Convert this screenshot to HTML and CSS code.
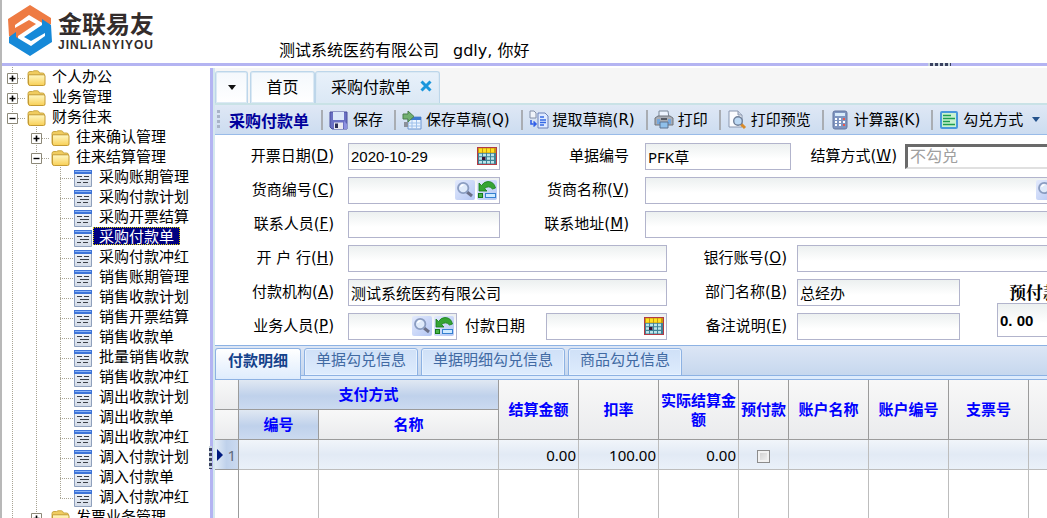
FILE: index.html
```html
<!DOCTYPE html>
<html lang="zh-CN">
<head>
<meta charset="utf-8">
<title>采购付款单</title>
<link rel="stylesheet" href="styles.css">
</head>
<body>
<svg class="defs" aria-hidden="true">
  <defs>
    <linearGradient id="gFolder" x1="0" y1="0" x2="0" y2="1"><stop offset="0" stop-color="#fff8c4"/><stop offset="1" stop-color="#f8cf55"/></linearGradient>
    <linearGradient id="gSheet" x1="0" y1="0" x2="0" y2="1"><stop offset="0" stop-color="#f4f7fc"/><stop offset="1" stop-color="#d3dbe8"/></linearGradient>
    <linearGradient id="gBtn" x1="0" y1="0" x2="1" y2="1"><stop offset="0" stop-color="#e3eafc"/><stop offset="1" stop-color="#b3c6f4"/></linearGradient>
  </defs>
  <symbol id="folder" viewBox="0 0 19 17"><path d="M1 5.5V3.5Q1 1.5 3 1.5H5.5L7 .8H10.5Q12 1 12.5 3H15.5Q17.5 3 17.5 5V14.5H3Q1 14.5 1 13Z" fill="#f0cc60" stroke="#cba845"/><path d="M1.5 4.8H16.5Q18 4.8 18 6V14Q18 15.5 16.5 15.5H3.2Q1.5 15.5 1.5 14Z" fill="url(#gFolder)" stroke="#c49a32"/></symbol>
  <symbol id="doc" viewBox="0 0 19 17"><path d="M.5.5H17.5V16.5H.5Z" fill="url(#gSheet)" stroke="#8fa0bc"/><path d="M0 0H18V4H0Z" fill="#3e74d8"/><path d="M1 1H17V2H1Z" fill="#8db4f4"/><path d="M3 6.5H8M10 6.5H15M6 9.500H15M3 12.500H7M9 12.500H14" stroke="#3c4048"/></symbol>
  <symbol id="plus" viewBox="0 0 11 11"><path d="M.5.5H10.5V10.5H.5Z" fill="#fff" stroke="#8c8878"/><path d="M2.5 5.5H8.5M5.5 2.5V8.5" stroke="#000" stroke-width="1.6"/></symbol>
  <symbol id="minus" viewBox="0 0 11 11"><path d="M.5.5H10.5V10.5H.5Z" fill="#fff" stroke="#8c8878"/><path d="M2.5 5.5H8.5" stroke="#000" stroke-width="1.4"/></symbol>
  <symbol id="search" viewBox="0 0 20 20"><rect width="20" height="20" rx="2" fill="url(#gBtn)"/><path d="M12 12L17 16" stroke="#6a6f88" stroke-width="3"/><circle cx="8.2" cy="8" r="5.2" fill="#dfeafa" stroke="#8a9cc0" stroke-width="1.8"/><path d="M5.5 7Q6.5 5 8.5 4.8" stroke="#fff" stroke-width="1.4" fill="none"/></symbol>
  <symbol id="undo" viewBox="0 0 20 20"><rect width="20" height="20" rx="2" fill="url(#gBtn)"/><path d="M2 3L2 11H10L7.5 8.5Q12 5 15.5 9L18.5 8Q17 1.500 11 1.500Q7 1.500 4.500 5.500Z" fill="#35a434" stroke="#157c18" stroke-width=".8"/><rect x="1.500" y="13.500" width="4" height="4" fill="#49b34a" stroke="#157c18"/><rect x="8.500" y="13.500" width="10" height="4" fill="#cfeaff" stroke="#3580d0"/></symbol>
  <symbol id="calendar" viewBox="0 0 20 18"><rect x=".5" y=".5" width="19" height="17" fill="#3f8296" stroke="#b33a45"/><path d="M1 1H19V6H1Z" fill="#c89a10"/><path d="M2 3.500H18" stroke="#ffe020" stroke-width="4" stroke-dasharray="3 1"/><path d="M2 8H18M2 11.500H18M2 15.200H18" stroke="#bce5ea" stroke-width="2.600" stroke-dasharray="3 1"/><path d="M5 10H8.500V13H5Z" fill="#3b1237"/></symbol>
</svg>

<div class="app">
  <header class="header">
    <div class="brand">
      <svg class="brand-mark" viewBox="0 0 44 52" role="img" aria-label="金联易友">
        <path d="M0 14L22 0L43 13V19L36 24V19L21 10L7 20V23L21 15L28 19L10 31V37L1 31Z" fill="#ee7b43"/>
        <path d="M0 14L22 0L43 13V19L36 24V19L21 10L7 20V23L21 15L28 19L10 31V37L1 31Z" fill="#1689d8" transform="rotate(180 22 25.500)"/>
      </svg>
      <div class="brand-text"><span class="brand-cn">金联易友</span><span class="brand-en">JINLIANYIYOU</span></div>
    </div>
    <div class="greeting"><span>测试系统医药有限公司</span><span>gdly, 你好</span></div>
    <span class="grip-h"></span>
  </header>

  <div class="body">
    <nav class="sidebar">
      <ul class="tree">
        <li class="node"><i class="cell line branch"><svg class="box"><use href="#plus"/></svg></i><svg class="ico"><use href="#folder"/></svg><a class="label" href="#">个人办公</a></li>
        <li class="node"><i class="cell line branch"><svg class="box"><use href="#plus"/></svg></i><svg class="ico"><use href="#folder"/></svg><a class="label" href="#">业务管理</a></li>
        <li class="node"><i class="cell line branch"><svg class="box"><use href="#minus"/></svg></i><svg class="ico"><use href="#folder"/></svg><a class="label" href="#">财务往来</a></li>
        <li class="node"><i class="cell line"></i><i class="cell line branch"><svg class="box"><use href="#plus"/></svg></i><svg class="ico"><use href="#folder"/></svg><a class="label" href="#">往来确认管理</a></li>
        <li class="node"><i class="cell line"></i><i class="cell line branch"><svg class="box"><use href="#minus"/></svg></i><svg class="ico"><use href="#folder"/></svg><a class="label" href="#">往来结算管理</a></li>
        <li class="node"><i class="cell line"></i><i class="cell line"></i><i class="cell line branch"></i><svg class="ico"><use href="#doc"/></svg><a class="label" href="#">采购账期管理</a></li>
        <li class="node"><i class="cell line"></i><i class="cell line"></i><i class="cell line branch"></i><svg class="ico"><use href="#doc"/></svg><a class="label" href="#">采购付款计划</a></li>
        <li class="node"><i class="cell line"></i><i class="cell line"></i><i class="cell line branch"></i><svg class="ico"><use href="#doc"/></svg><a class="label" href="#">采购开票结算</a></li>
        <li class="node"><i class="cell line"></i><i class="cell line"></i><i class="cell line branch"></i><svg class="ico"><use href="#doc"/></svg><a class="label selected" href="#">采购付款单</a></li>
        <li class="node"><i class="cell line"></i><i class="cell line"></i><i class="cell line branch"></i><svg class="ico"><use href="#doc"/></svg><a class="label" href="#">采购付款冲红</a></li>
        <li class="node"><i class="cell line"></i><i class="cell line"></i><i class="cell line branch"></i><svg class="ico"><use href="#doc"/></svg><a class="label" href="#">销售账期管理</a></li>
        <li class="node"><i class="cell line"></i><i class="cell line"></i><i class="cell line branch"></i><svg class="ico"><use href="#doc"/></svg><a class="label" href="#">销售收款计划</a></li>
        <li class="node"><i class="cell line"></i><i class="cell line"></i><i class="cell line branch"></i><svg class="ico"><use href="#doc"/></svg><a class="label" href="#">销售开票结算</a></li>
        <li class="node"><i class="cell line"></i><i class="cell line"></i><i class="cell line branch"></i><svg class="ico"><use href="#doc"/></svg><a class="label" href="#">销售收款单</a></li>
        <li class="node"><i class="cell line"></i><i class="cell line"></i><i class="cell line branch"></i><svg class="ico"><use href="#doc"/></svg><a class="label" href="#">批量销售收款</a></li>
        <li class="node"><i class="cell line"></i><i class="cell line"></i><i class="cell line branch"></i><svg class="ico"><use href="#doc"/></svg><a class="label" href="#">销售收款冲红</a></li>
        <li class="node"><i class="cell line"></i><i class="cell line"></i><i class="cell line branch"></i><svg class="ico"><use href="#doc"/></svg><a class="label" href="#">调出收款计划</a></li>
        <li class="node"><i class="cell line"></i><i class="cell line"></i><i class="cell line branch"></i><svg class="ico"><use href="#doc"/></svg><a class="label" href="#">调出收款单</a></li>
        <li class="node"><i class="cell line"></i><i class="cell line"></i><i class="cell line branch"></i><svg class="ico"><use href="#doc"/></svg><a class="label" href="#">调出收款冲红</a></li>
        <li class="node"><i class="cell line"></i><i class="cell line"></i><i class="cell line branch"></i><svg class="ico"><use href="#doc"/></svg><a class="label" href="#">调入付款计划</a></li>
        <li class="node"><i class="cell line"></i><i class="cell line"></i><i class="cell line branch"></i><svg class="ico"><use href="#doc"/></svg><a class="label" href="#">调入付款单</a></li>
        <li class="node"><i class="cell line"></i><i class="cell line"></i><i class="cell line last branch"></i><svg class="ico"><use href="#doc"/></svg><a class="label" href="#">调入付款冲红</a></li>
        <li class="node"><i class="cell line"></i><i class="cell line branch"><svg class="box"><use href="#plus"/></svg></i><svg class="ico"><use href="#folder"/></svg><a class="label" href="#">发票业务管理</a></li>
      </ul>
    </nav>
    <div class="splitter"><span class="grip-v"></span></div>

    <main class="main">
      <div class="content">
        <div class="page-tabs">
          <button class="page-tab menu" aria-label="标签列表"><svg width="8" height="5" viewBox="0 0 8 5"><path d="M0 0H8L4 5Z" fill="#111"/></svg></button>
          <button class="page-tab home">首页</button>
          <button class="page-tab active">采购付款单<svg width="12" height="12" viewBox="0 0 12 12"><path d="M1.500 1.500L10.500 10.500M10.500 1.500L1.500 10.500" stroke="#1a96dc" stroke-width="3"/></svg></button>
        </div>

        <div class="toolbar">
          <span class="grip"></span>
          <h1 class="title">采购付款单</h1>
          <button class="tool"><svg viewBox="0 0 20 20"><path d="M1 2H18V19H3L1 17Z" fill="#6a70c4" stroke="#4a4f9c"/><path d="M4 2H15V10H4Z" fill="#dce8fa"/><path d="M5 12.500H14V19H5Z" fill="#e8e8f0"/><path d="M6 13.500H9V18H6Z" fill="#2a2d55"/><path d="M15 11L18 14V19H15Z" fill="#8d92e0"/></svg>保存</button>
          <button class="tool"><svg viewBox="0 0 20 20"><path d="M6 7H19V19H6Z" fill="#eaf4ff" stroke="#6c95cf"/><path d="M6 7H19V10H6Z" fill="#3e7ad0"/><path d="M6 13H19M6 16H19M10 10V19M14.500 10V19" stroke="#9dc0ea"/><path d="M1 4H6V1L12 6.500L6 12V9H1Z" fill="#72b070" stroke="#4a7f4d"/><path d="M2 12H6V17H2Z" fill="#8b9099"/></svg>保存草稿(Q)</button>
          <button class="tool"><svg viewBox="0 0 20 20"><path d="M1 1H5L7 3V8H1Z" fill="#f0f4fa" stroke="#8490a8"/><path d="M2 10V14H6M4.500 11.500L7 14L4.500 16.500" fill="none" stroke="#315fe8" stroke-width="1.600"/><path d="M9 3H16L19 6V18H9Z" fill="#dfeaff" stroke="#6a80b8"/><path d="M11 7H15M11 10H17M11 12.500H17M11 15H15" stroke="#3569e4" stroke-width="1.500"/></svg>提取草稿(R)</button>
          <button class="tool"><svg viewBox="0 0 20 20"><path d="M5 1H14L15 8H5Z" fill="#edf4ff" stroke="#7b8798"/><path d="M1 8L4 6H16L19 8V15H1Z" fill="#a9adb5" stroke="#6f747d"/><path d="M3 9H6V14H3M14 9H17V14H14" fill="#75a7dc"/><path d="M6 12H14V18H6Z" fill="#8fc0ea" stroke="#5c7290"/><path d="M7 8H13V10H7Z" fill="#555a64"/></svg>打印</button>
          <button class="tool"><svg viewBox="0 0 20 20"><path d="M2 1H11L15 5V17H2Z" fill="#fbfcfe" stroke="#8996ae"/><path d="M11 1V5H15" fill="#cbd4e2" stroke="#8996ae"/><path d="M14 14L18 18" stroke="#d88b2a" stroke-width="3"/><circle cx="11" cy="11" r="4.300" fill="#bcd9f4" stroke="#6f7f98" stroke-width="1.400"/></svg>打印预览</button>
          <button class="tool"><svg viewBox="0 0 20 20"><rect x="3" y="1" width="14" height="18" rx="2" fill="#7f95c0" stroke="#6577a0"/><path d="M5 3H15V6H5Z" fill="#d7eafa"/><path d="M5 9H15M5 12H15M5 15H15" stroke="#fff" stroke-width="2" stroke-dasharray="2 2"/><path d="M13 9H15M13 15H15" stroke="#e7584e" stroke-width="2"/></svg>计算器(K)</button>
          <button class="tool"><svg viewBox="0 0 20 20"><rect x="2" y="2" width="16" height="16" rx="1" fill="#c9f2cf" stroke="#4a98dc" stroke-width="2"/><path d="M4 5.500H12M4 8.500H16M4 11.500H11M4 14.500H16" stroke="#1d9d50" stroke-width="1.500"/></svg>勾兑方式<svg class="caret" viewBox="0 0 8 6"><path d="M0 0H8L4 5Z" fill="#24528c"/></svg></button>
        </div>

        <form class="form">
          <div class="row">
            <label class="lab l1" for="f1">开票日期(<u>D</u>)</label>
            <span class="field w152"><input id="f1" class="latin" value="2020-10-29"><button type="button" class="pick" aria-label="选择日期"><svg class="cal"><use href="#calendar"/></svg></button></span>
            <label class="lab l2" for="f2">单据编号</label>
            <span class="field w146"><input id="f2" value="PFK草"></span>
            <label class="lab l3" for="f3">结算方式(<u>W</u>)</label>
            <select id="f3" class="select" disabled><option>不勾兑</option></select>
          </div>
          <div class="row">
            <label class="lab l1" for="f4">货商编号(<u>C</u>)</label>
            <span class="field w152"><input id="f4"><button type="button" class="pick" aria-label="查找"><svg><use href="#search"/></svg></button><button type="button" class="pick" aria-label="清除"><svg><use href="#undo"/></svg></button></span>
            <label class="lab l2" for="f5">货商名称(<u>V</u>)</label>
            <span class="field grow"><input id="f5"><button type="button" class="pick" aria-label="查找"><svg><use href="#search"/></svg></button><button type="button" class="pick" aria-label="清除"><svg><use href="#undo"/></svg></button></span>
          </div>
          <div class="row">
            <label class="lab l1" for="f6">联系人员(<u>F</u>)</label>
            <span class="field w152"><input id="f6"></span>
            <label class="lab l2" for="f7">联系地址(<u>M</u>)</label>
            <span class="field grow"><input id="f7"></span>
          </div>
          <div class="row">
            <label class="lab l1" for="f8">开 户 行(<u>H</u>)</label>
            <span class="field w319"><input id="f8"></span>
            <label class="lab l4" for="f9">银行账号(<u>O</u>)</label>
            <span class="field grow"><input id="f9"></span>
          </div>
          <div class="lower">
            <div class="lower-rows">
              <div class="row">
                <label class="lab l1" for="f10">付款机构(<u>A</u>)</label>
                <span class="field w319"><input id="f10" value="测试系统医药有限公司"></span>
                <label class="lab l4" for="f11">部门名称(<u>B</u>)</label>
                <span class="field w163"><input id="f11" value="总经办"></span>
              </div>
              <div class="row">
                <label class="lab l1" for="f12">业务人员(<u>P</u>)</label>
                <span class="field w109"><input id="f12"><button type="button" class="pick" aria-label="查找"><svg><use href="#search"/></svg></button><button type="button" class="pick" aria-label="清除"><svg><use href="#undo"/></svg></button></span>
                <label class="lab l5" for="f13">付款日期</label>
                <span class="field w121"><input id="f13"><button type="button" class="pick" aria-label="选择日期"><svg class="cal"><use href="#calendar"/></svg></button></span>
                <label class="lab l4" for="f14">备注说明(<u>E</u>)</label>
                <span class="field w163"><input id="f14"></span>
              </div>
            </div>
            <div class="prepay">
              <label class="prepay-label" for="f15">预付款</label>
              <span class="field tall"><input id="f15" value="0. 00"></span>
            </div>
          </div>
        </form>

        <div class="detail-tabs">
          <button class="detail-tab current">付款明细</button>
          <button class="detail-tab">单据勾兑信息</button>
          <button class="detail-tab">单据明细勾兑信息</button>
          <button class="detail-tab">商品勾兑信息</button>
        </div>

        <div class="grid-wrap">
          <table class="grid">
            <colgroup><col class="c24"><col class="c80"><col class="c180"><col class="c80"><col class="c80"><col class="c80"><col class="c50"><col class="c80"><col class="c80"><col class="c80"><col></colgroup>
            <thead>
              <tr><th></th><th colspan="2" class="hot">支付方式</th><th rowspan="2">结算金额</th><th rowspan="2">扣率</th><th rowspan="2">实际结算金额</th><th rowspan="2">预付款</th><th rowspan="2">账户名称</th><th rowspan="2">账户编号</th><th rowspan="2">支票号</th><th rowspan="2"></th></tr>
              <tr><th></th><th class="hot">编号</th><th>名称</th></tr>
            </thead>
            <tbody>
              <tr class="active-row"><td class="rownum"><svg width="6" height="12" viewBox="0 0 6 12"><path d="M0 0L6 6L0 12Z" fill="#001a80"/></svg>1</td><td></td><td></td><td class="num">0.00</td><td class="num">100.00</td><td class="num">0.00</td><td class="mid"><input type="checkbox" class="check" aria-label="预付款"></td><td></td><td></td><td></td><td></td></tr>
              <tr class="rest"><td></td><td></td><td></td><td></td><td></td><td></td><td></td><td></td><td></td><td></td><td></td></tr>
            </tbody>
          </table>
        </div>
      </div>
    </main>
  </div>
</div>
</body>
</html>
```

FILE: styles.css
```css
* { box-sizing: border-box; }

html, body { height: 100%; margin: 0; }

body {
  overflow: hidden;
  background: #fff;
  color: #000;
  font: 15px/20px "DejaVu Sans", "Noto Sans CJK SC", sans-serif;
}

button, input, select { font: inherit; color: inherit; margin: 0; padding: 0; }
button { background: none; border: 0; white-space: nowrap; }
svg { display: block; flex: none; }
.defs { position: absolute; width: 0; height: 0; }

.app {
  display: flex;
  flex-direction: column;
  height: 100vh;
  box-shadow: inset 2px 0 #b8b8b8;
}

/* Header */
.header {
  position: relative;
  flex: none;
  display: flex;
  align-items: flex-start;
  height: 66px;
  margin-left: 2px;
  padding: 5px 0 0 6px;
  border-bottom: 3px solid #b4b4f2;
}
.brand { display: flex; gap: 6px; width: 271px; }
.brand-mark { width: 44px; height: 52px; }
.brand-text { display: flex; flex-direction: column; padding-top: 3px; color: #332c2b; }
.brand-cn { font: bold 24px/30px "Noto Sans CJK SC", sans-serif; }
.brand-en { font: bold 12px/14px "Liberation Sans", sans-serif; letter-spacing: 1px; }
.greeting { display: flex; gap: 14px; padding-top: 36px; font: 16px/20px "DejaVu Sans", "Noto Sans CJK SC", sans-serif; }
.grip-h {
  position: absolute;
  left: 926px;
  bottom: -3px;
  width: 23px;
  height: 3px;
  background: repeating-linear-gradient(90deg, #c8d4dc 0 2px, #3a4160 2px 5px);
}

/* Tree */
.body { flex: 1; display: flex; min-height: 0; }
.sidebar { flex: none; width: 210px; overflow: hidden; padding-top: 1px; }
.tree { list-style: none; margin: 0; padding: 0; font-family: "Noto Sans CJK SC", sans-serif; }
.node { display: flex; align-items: center; height: 20px; }
.cell { flex: none; display: flex; align-items: center; width: 25px; height: 20px; padding-left: 7px; margin-right: -1px; }
.cell:last-of-type { margin-right: 2px; }
.line { background: repeating-linear-gradient(#a8a494 0 1px, transparent 1px 2px) 12px 0 / 1px 100% no-repeat; }
.branch {
  background:
    repeating-linear-gradient(#a8a494 0 1px, transparent 1px 2px) 12px 0 / 1px 100% no-repeat,
    repeating-linear-gradient(90deg, #a8a494 0 1px, transparent 1px 2px) 12px 11px / 13px 1px no-repeat;
}
.line.last { background-size: 1px 12px, 13px 1px; }
.cell:nth-of-type(3) { margin-right: 1px; }
.box { width: 11px; height: 11px; margin-top: 3px; }
.ico { width: 19px; height: 17px; margin-top: 3px; }
.label { align-self: flex-start; padding: 0 6px; color: #000; line-height: 18px; text-decoration: none; white-space: nowrap; }
.label.selected { background: #000080; color: #fff; outline: 1px dotted #d8d000; outline-offset: -1px; }

.splitter { position: relative; flex: none; width: 3px; margin-top: 2px; background: #b4b4f2; }
.grip-v {
  position: absolute;
  left: -1px;
  bottom: 49px;
  width: 3px;
  height: 23px;
  background: repeating-linear-gradient(#c8d4dc 0 2px, #3a4160 2px 5px);
}

/* Page area */
.main { flex: 1; min-width: 0; margin-top: 2px; overflow: hidden; border-left: 2px solid #d4e8ee; }
.content { display: flex; flex-direction: column; min-width: 866px; height: 100%; }

.page-tabs { flex: none; display: flex; align-items: flex-end; height: 35px; background: #f6f6f6; font: 16px/20px "Noto Sans CJK SC", sans-serif; }
.page-tab {
  display: flex;
  align-items: center;
  justify-content: center;
  gap: 9px;
  height: 32px;
  padding-bottom: 4px;
  border: 1px solid #bdd6ea;
  border-bottom: 0;
  border-radius: 3px 3px 0 0;
  background: linear-gradient(#f4f8fc, #fff);
  box-shadow: inset 0 0 0 1px #dbe9f4;
}
.page-tab.menu { width: 33px; margin-right: 2px; padding-bottom: 0; }
.page-tab.home { width: 65px; }
.page-tab.active { padding: 0 7px 4px 15px; background: linear-gradient(#e8f1fa, #dbe8f5); }

.toolbar {
  flex: none;
  display: flex;
  align-items: center;
  height: 32px;
  border-top: 2px solid #c9e2e6;
  border-bottom: 1px solid #99bbe8;
  background: linear-gradient(#dfe8f5, #ccdcf0);
  white-space: nowrap;
}
.grip { width: 3px; height: 20px; margin: 0 9px 0 2px; background: repeating-linear-gradient(#a8b4c8 0 3px, transparent 3px 5px); }
.title { margin: 0; padding-right: 12px; color: #00009c; font: bold 16px/24px "Noto Sans CJK SC", sans-serif; }
.tool { display: flex; align-items: center; gap: 4px; height: 20px; padding: 0 11px 0 6px; border-left: 2px solid #a9adb3; }
.tool svg { width: 20px; height: 20px; }
.tool .caret { width: 8px; height: 6px; margin-left: 5px; }

/* Form */
.form { flex: none; padding: 4px 0 2px; white-space: nowrap; }
.row { display: flex; align-items: center; height: 34px; }
.lab { flex: none; text-align: right; }
.l1 { width: 133px; padding-right: 14px; }
.l2 { width: 145px; padding-right: 16px; }
.l3 { width: 114px; padding-right: 8px; }
.l4 { width: 130px; padding-right: 10px; }
.l5 { width: 89px; padding-right: 21px; }
.field {
  flex: none;
  display: flex;
  align-items: center;
  gap: 2px;
  height: 27px;
  padding-right: 2px;
  border: 1px solid #b2b4cc;
  background: linear-gradient(#ecf0f0, #fff 60%);
}
.field input { flex: 1; min-width: 0; width: 0; height: 24px; padding: 0 2px; border: 0; background: none; outline: 0; font-family: "Noto Sans", "Noto Sans CJK SC", sans-serif; }
.field input.latin { font-family: "Liberation Sans", sans-serif; }
.grow { flex: 1; }
.w109 { width: 109px; }
.w121 { width: 121px; }
.w146 { width: 146px; }
.w152 { width: 152px; }
.w163 { width: 163px; }
.w319 { width: 319px; }
.pick svg { width: 20px; height: 20px; }
.pick .cal { height: 18px; }
.select {
  flex: 1;
  height: 25px;
  padding-left: 2px;
  appearance: none;
  border: 2px solid #e0e0e0;
  border-top: 3px solid #6a6a6a;
  border-left: 3px solid #6a6a6a;
  background: #fff;
  color: #a0a0a0;
  font-size: 16px;
  line-height: 20px;
  opacity: 1;
}
.lower { display: flex; }
.prepay { flex: 1; padding: 6px 0 0 37px; }
.prepay-label { display: block; padding-left: 12px; font: bold 17px/22px "Noto Serif CJK SC", "Noto Sans CJK SC", serif; }
.tall { height: 34px; }
.field.tall input { font: bold 15px/20px "Liberation Sans", sans-serif; }

/* Detail tabs */
.detail-tabs {
  flex: none;
  display: flex;
  align-items: flex-start;
  gap: 3px;
  height: 35px;
  padding-top: 2px;
  border-top: 1px solid #8db2e3;
  border-bottom: 1px solid #8db2e3;
  background: linear-gradient(#dce6f5, #c6d7ee 29px, #8db2e3 29px 30px, #deecfd 30px) padding-box;
  font-family: "Noto Sans CJK SC", sans-serif;
}
.detail-tab {
  height: 28px;
  padding: 0 11px 6px;
  border: 1px solid #8db2e3;
  border-radius: 3px 3px 0 0;
  background: linear-gradient(#cfe0f7, #deecfd);
  box-shadow: inset 0 0 0 1px #e8f2fe;
  color: #416aa3;
}
.detail-tab.current { height: 31px; padding: 0 12px 9px; border-bottom: 0; background: linear-gradient(#fff, #deecfd); box-shadow: none; color: #15428b; font-weight: bold; }

/* Data grid */
.grid-wrap { flex: 1; min-height: 0; }
.grid { width: 100%; height: 100%; table-layout: fixed; border-collapse: separate; border-spacing: 0; font-family: "Noto Sans", "Noto Sans CJK SC", sans-serif; }
.c24 { width: 24px; }
.c50 { width: 50px; }
.c80 { width: 80px; }
.c180 { width: 180px; }
.grid th, .grid td { height: 30px; padding: 0 2px; border-right: 1px solid #bdbdbd; border-bottom: 1px solid #bdbdbd; }
.grid th { border-color: #9b9b9b; padding: 0; background: linear-gradient(#f8f8f8, #eaebed); color: #0000ff; font-weight: bold; line-height: 19px; }
.grid th.hot { background: linear-gradient(#e0e8f3, #bfd1eb 55%, #cbdaf0); }
.active-row td { background: linear-gradient(#f1f5fa, #e2eaf5 50%, #eaf1f9); }
.grid .rownum { border-color: #9b9b9b; background: linear-gradient(90deg, #e3ecf7, #bfd1eb 50%, #cbdaf0); color: #5f6a7c; text-align: right; }
.rownum svg { float: left; margin-top: 4px; }
.rest td:first-child { border-right-color: #9b9b9b; }
.grid .rest td { height: auto; border-bottom: 0; }
.num { text-align: right; }
.mid { text-align: center; }
.check { appearance: none; width: 13px; height: 13px; border: 1px solid #8c8c8c; background: linear-gradient(135deg, #ccc, #f6f6f6); box-shadow: inset 0 0 0 2px #f2f2f2; vertical-align: middle; }
```
